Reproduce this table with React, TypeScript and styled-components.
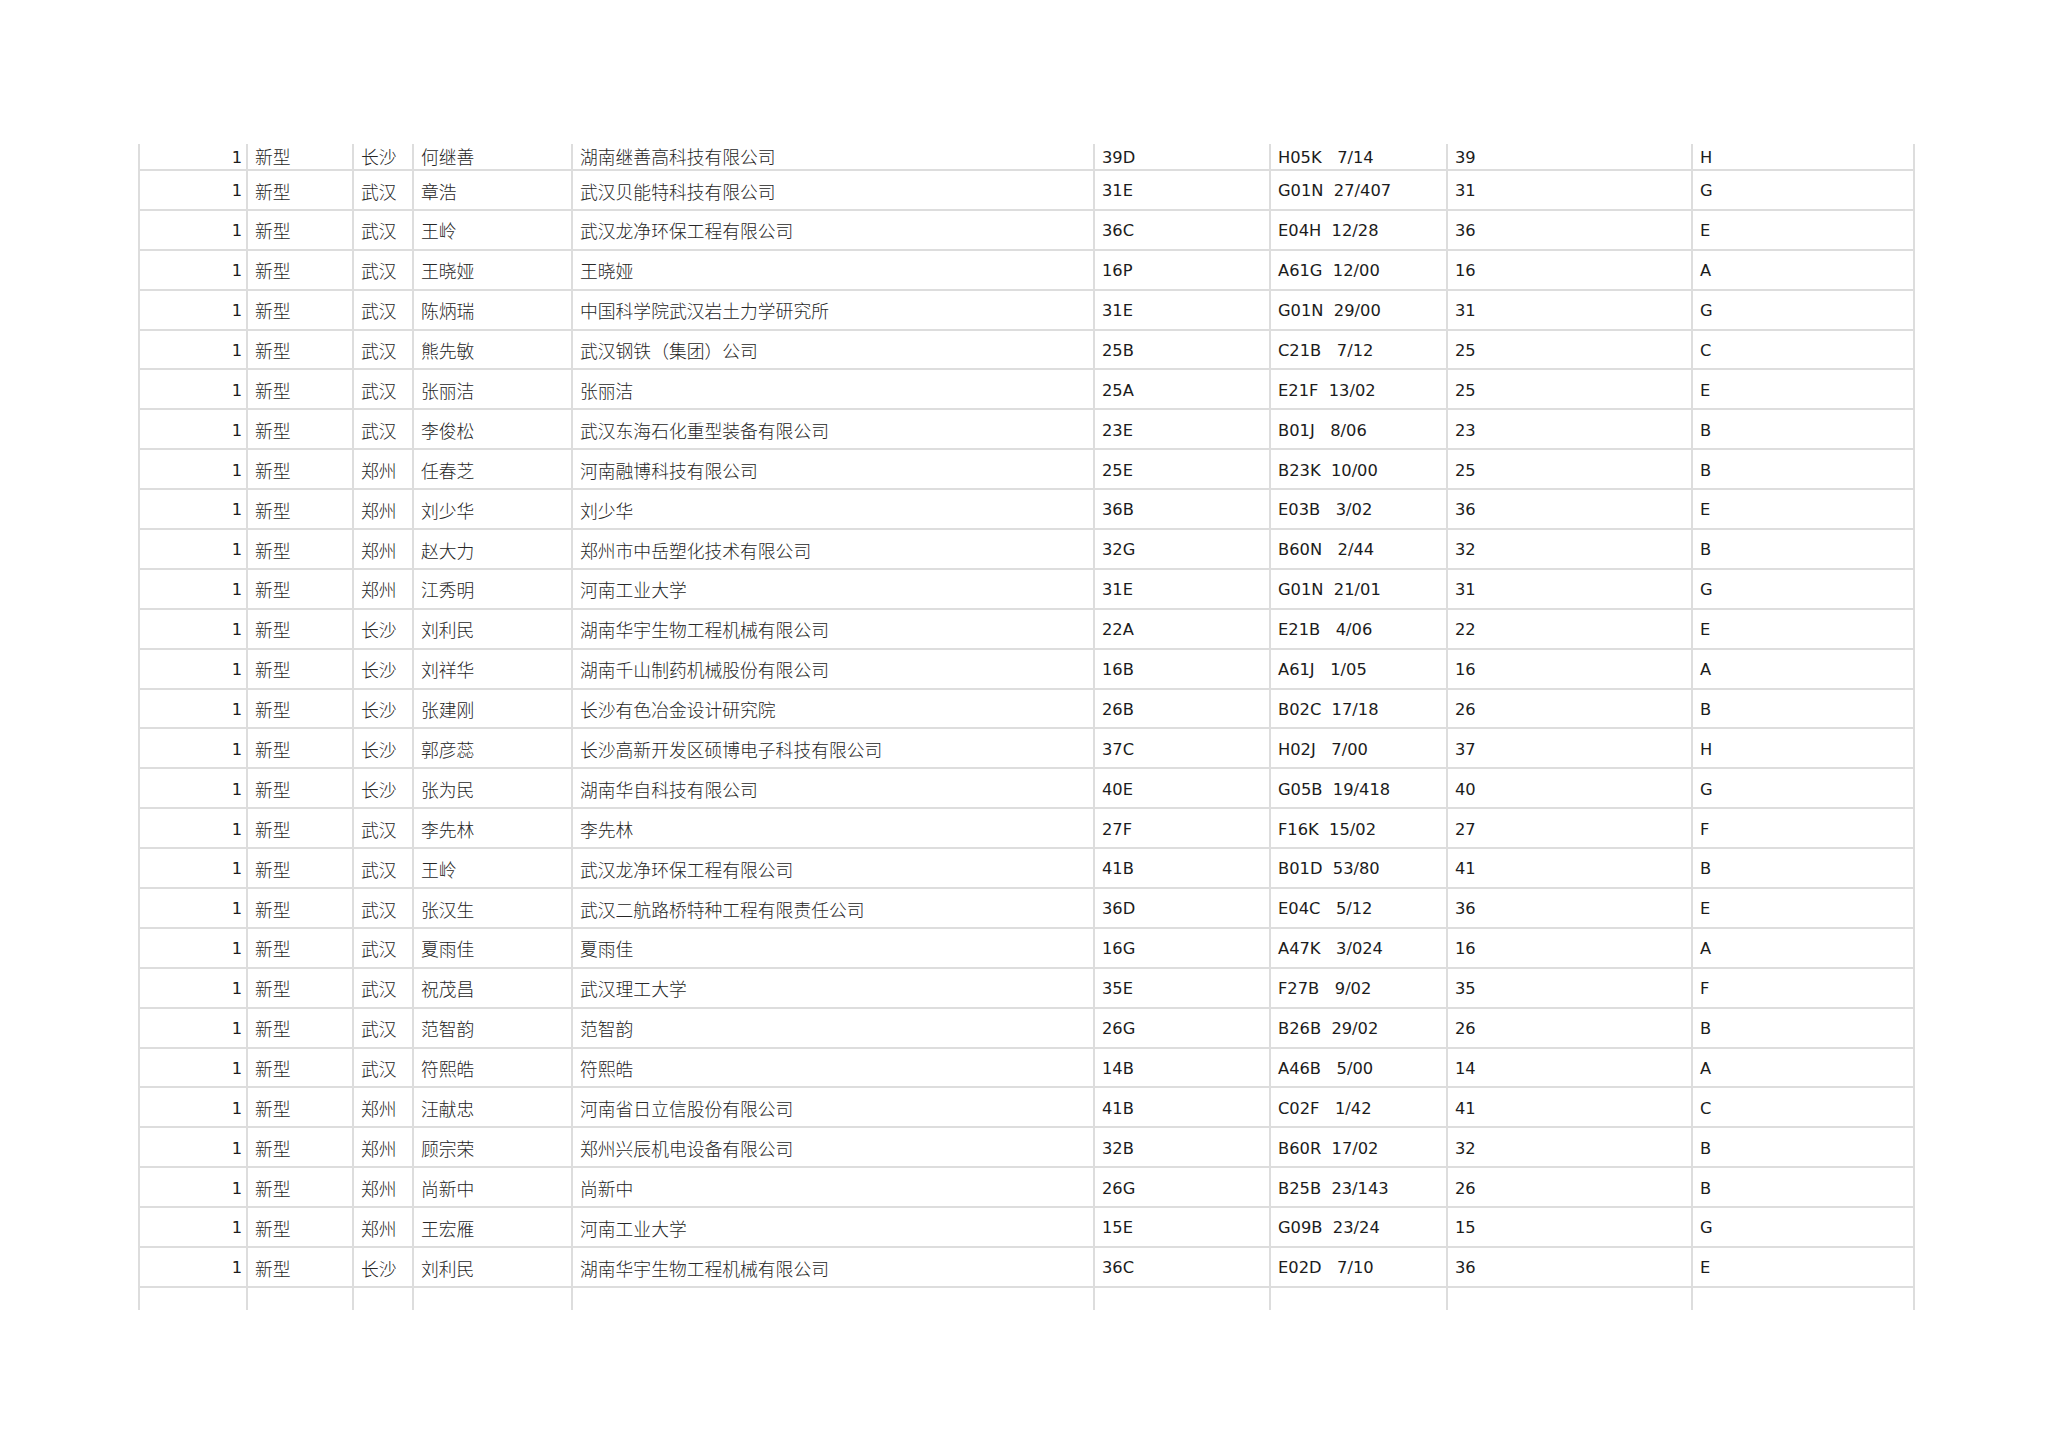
import React from "react";
import styled, { createGlobalStyle } from "styled-components";

type Row = [string, string, string, string, string, string, string, string];

// type, city, inventor, applicant, code, IPC, class no, section
const rows: Row[] = [
  ["新型", "长沙", "何继善", "湖南继善高科技有限公司", "39D", "H05K   7/14", "39", "H"],
  ["新型", "武汉", "章浩", "武汉贝能特科技有限公司", "31E", "G01N  27/407", "31", "G"],
  ["新型", "武汉", "王岭", "武汉龙净环保工程有限公司", "36C", "E04H  12/28", "36", "E"],
  ["新型", "武汉", "王晓娅", "王晓娅", "16P", "A61G  12/00", "16", "A"],
  ["新型", "武汉", "陈炳瑞", "中国科学院武汉岩土力学研究所", "31E", "G01N  29/00", "31", "G"],
  ["新型", "武汉", "熊先敏", "武汉钢铁（集团）公司", "25B", "C21B   7/12", "25", "C"],
  ["新型", "武汉", "张丽洁", "张丽洁", "25A", "E21F  13/02", "25", "E"],
  ["新型", "武汉", "李俊松", "武汉东海石化重型装备有限公司", "23E", "B01J   8/06", "23", "B"],
  ["新型", "郑州", "任春芝", "河南融博科技有限公司", "25E", "B23K  10/00", "25", "B"],
  ["新型", "郑州", "刘少华", "刘少华", "36B", "E03B   3/02", "36", "E"],
  ["新型", "郑州", "赵大力", "郑州市中岳塑化技术有限公司", "32G", "B60N   2/44", "32", "B"],
  ["新型", "郑州", "江秀明", "河南工业大学", "31E", "G01N  21/01", "31", "G"],
  ["新型", "长沙", "刘利民", "湖南华宇生物工程机械有限公司", "22A", "E21B   4/06", "22", "E"],
  ["新型", "长沙", "刘祥华", "湖南千山制药机械股份有限公司", "16B", "A61J   1/05", "16", "A"],
  ["新型", "长沙", "张建刚", "长沙有色冶金设计研究院", "26B", "B02C  17/18", "26", "B"],
  ["新型", "长沙", "郭彦蕊", "长沙高新开发区硕博电子科技有限公司", "37C", "H02J   7/00", "37", "H"],
  ["新型", "长沙", "张为民", "湖南华自科技有限公司", "40E", "G05B  19/418", "40", "G"],
  ["新型", "武汉", "李先林", "李先林", "27F", "F16K  15/02", "27", "F"],
  ["新型", "武汉", "王岭", "武汉龙净环保工程有限公司", "41B", "B01D  53/80", "41", "B"],
  ["新型", "武汉", "张汉生", "武汉二航路桥特种工程有限责任公司", "36D", "E04C   5/12", "36", "E"],
  ["新型", "武汉", "夏雨佳", "夏雨佳", "16G", "A47K   3/024", "16", "A"],
  ["新型", "武汉", "祝茂昌", "武汉理工大学", "35E", "F27B   9/02", "35", "F"],
  ["新型", "武汉", "范智韵", "范智韵", "26G", "B26B  29/02", "26", "B"],
  ["新型", "武汉", "符熙皓", "符熙皓", "14B", "A46B   5/00", "14", "A"],
  ["新型", "郑州", "汪献忠", "河南省日立信股份有限公司", "41B", "C02F   1/42", "41", "C"],
  ["新型", "郑州", "顾宗荣", "郑州兴辰机电设备有限公司", "32B", "B60R  17/02", "32", "B"],
  ["新型", "郑州", "尚新中", "尚新中", "26G", "B25B  23/143", "26", "B"],
  ["新型", "郑州", "王宏雁", "河南工业大学", "15E", "G09B  23/24", "15", "G"],
  ["新型", "长沙", "刘利民", "湖南华宇生物工程机械有限公司", "36C", "E02D   7/10", "36", "E"],
];

const widths = [108, 106, 60, 159, 522, 176, 177, 245, 222];

export default function App() {
  return (
    <>
      <GlobalStyle />
      <Page>
        <Sheet>
          <colgroup>
            {widths.map((w, i) => (
              <col key={i} style={{ width: w }} />
            ))}
          </colgroup>
          <tbody>
            {rows.map((r, i) => (
              <Line key={i} $first={i === 0}>
                <Cell $num>1</Cell>
                <Cell $cjk>{r[0]}</Cell>
                <Cell $cjk>{r[1]}</Cell>
                <Cell $cjk>{r[2]}</Cell>
                <Cell $cjk>{r[3]}</Cell>
                <Cell>{r[4]}</Cell>
                <Cell>{r[5]}</Cell>
                <Cell>{r[6]}</Cell>
                <Cell>{r[7]}</Cell>
              </Line>
            ))}
            <Line $tail>
              {widths.map((_, i) => (
                <Cell key={i} />
              ))}
            </Line>
          </tbody>
        </Sheet>
      </Page>
    </>
  );
}

const GlobalStyle = createGlobalStyle`
  html, body {
    margin: 0;
    background: #ffffff;
  }
  body {
    font-family: "DejaVu Sans", "Noto Sans CJK SC", sans-serif;
    color: #1c1c1c;
  }
`;

const Page = styled.div`
  width: 2048px;
  height: 1447px;
  padding: 144px 0 0 138px;
  box-sizing: border-box;
  overflow: hidden;
`;

const Sheet = styled.table`
  width: 1775px;
  table-layout: fixed;
  border-collapse: collapse;
  border-spacing: 0;
`;

const Line = styled.tr<{ $first?: boolean; $tail?: boolean }>`
  height: ${(p) => (p.$first ? "26px" : p.$tail ? "23px" : "39.9px")};

  & > td {
    vertical-align: ${(p) => (p.$first ? "bottom" : "middle")};
    padding-top: ${(p) => (p.$first ? "0" : "3px")};
    padding-bottom: ${(p) => (p.$first ? "3px" : "0")};
    border-top: ${(p) => (p.$first ? "none" : "2px solid #dddddd")};
    border-bottom: ${(p) => (p.$tail ? "none" : "2px solid #dddddd")};
  }
`;

const Cell = styled.td<{ $num?: boolean; $cjk?: boolean }>`
  border-left: 2px solid #dddddd;
  border-right: 2px solid #dddddd;
  box-sizing: border-box;
  padding-left: ${(p) => (p.$num ? "0" : "7px")};
  padding-right: ${(p) => (p.$num ? "4px" : "0")};
  text-align: ${(p) => (p.$num ? "right" : "left")};
  font-family: ${(p) =>
    p.$cjk
      ? '"Noto Sans CJK SC", sans-serif'
      : '"DejaVu Sans", "Noto Sans CJK SC", sans-serif'};
  font-size: ${(p) => (p.$cjk ? "17.8px" : "16.3px")};
  font-weight: ${(p) => (p.$cjk ? 300 : 400)};
  line-height: 1;
  white-space: pre;
  overflow: hidden;
  color: ${(p) => (p.$cjk ? "#262626" : "#1c1c1c")};
`;
